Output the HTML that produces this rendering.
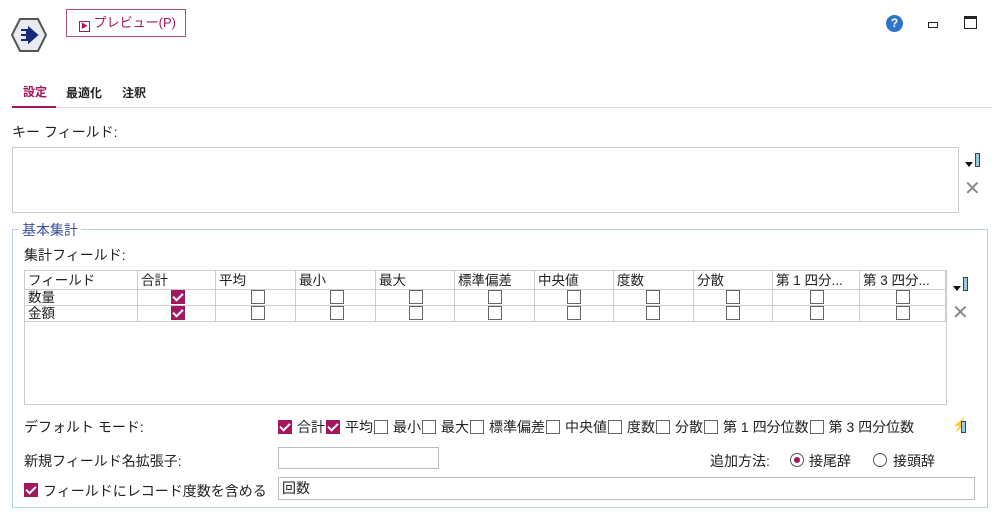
<!DOCTYPE html>
<html><head><meta charset="utf-8"><style>
*{box-sizing:border-box;margin:0;padding:0}
body{width:1000px;height:515px;background:#fff;font-family:"Liberation Sans","Noto Sans CJK JP",sans-serif;font-size:14px;color:#222;position:relative;overflow:hidden}
.a{position:absolute;white-space:nowrap}
.cb{position:absolute;width:14px;height:14px;border:1px solid #666;background:#fff}
.ck{position:absolute;width:14px;height:14px;background:#a3175e}
.ck:after{content:"";position:absolute;left:4px;top:1px;width:4px;height:8px;border:solid #fff;border-width:0 2px 2px 0;transform:rotate(45deg)}
.ic{display:inline-block;position:relative;width:14px;height:14px;vertical-align:-2px;margin:0 5px 0 0}
table{border-collapse:collapse;position:absolute;left:24px;top:270px;width:922px}
td{border:1px solid #ccc;height:16px;padding:0 3px;position:relative;font-size:13.5px;line-height:15px}
tr:first-child td{height:19px}
.x{font-size:20px;color:#888}
</style></head><body>
<svg class="a" style="left:10px;top:16px" width="38" height="38" viewBox="0 0 38 38"><polygon points="10,3 28,3 36,19 28,35 10,35 2,19" fill="#e8ecf0" stroke="#555" stroke-width="2"/><path d="M11 14h8M11 19h8M11 24h8M17 14v10M19 12l8 7-8 7z" fill="#1a2a7a" stroke="#1a2a7a" stroke-width="2"/></svg>
<div class="a" style="left:66px;top:9px;width:120px;height:28px;border:1px solid #b34f7f;color:#a3175e;font-size:13px;line-height:26px;padding-left:12px"><span style="display:inline-block;width:11px;height:11px;border:1px solid #a3175e;font-size:7px;line-height:9px;text-align:center;vertical-align:-1px">▶</span> プレビュー(P)</div>
<div class="a" style="left:886px;top:15px;width:17px;height:17px;border-radius:50%;background:#2d73c9;color:#fff;font-weight:bold;font-size:12px;text-align:center;line-height:17px">?</div>
<div class="a" style="left:928px;top:22px;width:10px;height:6px;border:1px solid #222"></div>
<div class="a" style="left:964px;top:16px;width:13px;height:13px;border:1px solid #222;border-top-width:3px"></div>
<div class="a" style="left:23px;top:83px;color:#a3175e;font-weight:bold;font-size:12px">設定</div>
<div class="a" style="left:66px;top:84px;font-weight:bold;font-size:12px">最適化</div>
<div class="a" style="left:122px;top:84px;font-weight:bold;font-size:12px">注釈</div>
<div class="a" style="left:12px;top:106px;width:44px;height:2px;background:#a3175e"></div>
<div class="a" style="left:56px;top:107px;width:936px;height:1px;background:#ddd"></div>
<div class="a" style="left:12px;top:122px">キー フィールド:</div>
<div class="a" style="left:12px;top:147px;width:947px;height:66px;border:1px solid #ccc"></div>
<div class="a" style="left:965px;top:150px;width:16px;height:18px"><div class="a" style="left:0;top:12px;border:4px solid transparent;border-top:5px solid #111"></div><div class="a" style="left:10px;top:3px;width:5px;height:14px;border:1px solid #345;background:#9cd"></div></div>
<div class="a x" style="left:964px;top:176px">✕</div>
<div class="a" style="left:12px;top:229px;width:976px;height:279px;border:1px solid #b8cde6"></div>
<div class="a" style="left:19px;top:220px;background:#fff;color:#3b4fa0;padding:0 3px;font-size:14px">基本集計</div>
<div class="a" style="left:24px;top:245px">集計フィールド:</div>
<div class="a" style="left:24px;top:270px;width:923px;height:135px;border:1px solid #ccc"></div>
<table>
<tr><td style="width:113px">フィールド</td><td style="width:78px">合計</td><td style="width:80px">平均</td><td style="width:80px">最小</td><td style="width:79px">最大</td><td style="width:80px">標準偏差</td><td style="width:79px">中央値</td><td style="width:80px">度数</td><td style="width:79px">分散</td><td style="width:87px">第 1 四分...</td><td>第 3 四分...</td></tr>
<tr><td>数量</td><td></td><td></td><td></td><td></td><td></td><td></td><td></td><td></td><td></td><td></td></tr>
<tr><td>金額</td><td></td><td></td><td></td><td></td><td></td><td></td><td></td><td></td><td></td><td></td></tr>
</table>
<div class="ck" style="left:171px;top:290px"></div><div class="ck" style="left:171px;top:306px"></div>
<div class="cb" style="left:251px;top:290px"></div><div class="cb" style="left:251px;top:306px"></div>
<div class="cb" style="left:330px;top:290px"></div><div class="cb" style="left:330px;top:306px"></div>
<div class="cb" style="left:409px;top:290px"></div><div class="cb" style="left:409px;top:306px"></div>
<div class="cb" style="left:488px;top:290px"></div><div class="cb" style="left:488px;top:306px"></div>
<div class="cb" style="left:567px;top:290px"></div><div class="cb" style="left:567px;top:306px"></div>
<div class="cb" style="left:646px;top:290px"></div><div class="cb" style="left:646px;top:306px"></div>
<div class="cb" style="left:726px;top:290px"></div><div class="cb" style="left:726px;top:306px"></div>
<div class="cb" style="left:810px;top:290px"></div><div class="cb" style="left:810px;top:306px"></div>
<div class="cb" style="left:896px;top:290px"></div><div class="cb" style="left:896px;top:306px"></div>
<div class="a" style="left:953px;top:276px;width:16px;height:18px"><div class="a" style="left:0;top:10px;border:4px solid transparent;border-top:5px solid #111"></div><div class="a" style="left:10px;top:1px;width:5px;height:14px;border:1px solid #345;background:#9cd"></div></div>
<div class="a x" style="left:952px;top:300px">✕</div>
<div class="a" style="left:24px;top:417px">デフォルト モード:</div>
<div class="a" style="left:278px;top:417px"><span class="ck ic" style="position:relative"></span>合計<span class="ck ic" style="position:relative;margin-left:1px"></span>平均<span class="cb ic" style="position:relative;margin-left:1px"></span>最小<span class="cb ic" style="position:relative;margin-left:1px"></span>最大<span class="cb ic" style="position:relative;margin-left:1px"></span>標準偏差<span class="cb ic" style="position:relative;margin-left:1px"></span>中央値<span class="cb ic" style="position:relative;margin-left:1px"></span>度数<span class="cb ic" style="position:relative;margin-left:1px"></span>分散<span class="cb ic" style="position:relative;margin-left:1px"></span>第 1 四分位数<span class="cb ic" style="position:relative;margin-left:1px"></span>第 3 四分位数</div>
<div class="a" style="left:952px;top:417px;color:#cc0;font-size:13px;font-weight:bold">⚡</div><div class="a" style="left:961px;top:421px;width:5px;height:12px;border:1px solid #345;background:#9cd"></div>
<div class="a" style="left:24px;top:451px">新規フィールド名拡張子:</div>
<div class="a" style="left:278px;top:447px;width:161px;height:22px;border:1px solid #bbb"></div>
<div class="a" style="left:710px;top:451px">追加方法:</div>
<div class="a" style="left:790px;top:453px;width:14px;height:14px;border:1px solid #555;border-radius:50%"><div class="a" style="left:3px;top:3px;width:6px;height:6px;border-radius:50%;background:#a3175e"></div></div>
<div class="a" style="left:809px;top:451px">接尾辞</div>
<div class="a" style="left:873px;top:453px;width:14px;height:14px;border:1px solid #555;border-radius:50%"></div>
<div class="a" style="left:893px;top:451px">接頭辞</div>
<div class="ck" style="left:24px;top:483px"></div>
<div class="a" style="left:43px;top:481px">フィールドにレコード度数を含める</div>
<div class="a" style="left:278px;top:477px;width:697px;height:23px;border:1px solid #bbb;padding-left:3px;line-height:21px">回数</div>
</body></html>
